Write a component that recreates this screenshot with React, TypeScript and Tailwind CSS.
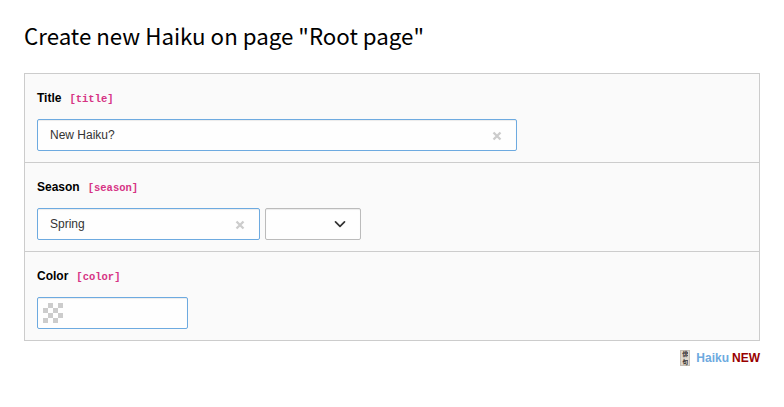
import type { ReactNode } from "react";

function Field({ label, name, children }: { label: string; name: string; children: ReactNode }) {
  return (
    <section className="h-[89px] border-b border-[#cccccc] px-3 pt-4">
      <label className="flex h-[18px] items-center text-[12px] font-bold leading-[18px] text-black">
        <span className="pb-[2px]">{label}</span>
        <code className="ml-2 pt-px font-['Liberation_Mono',monospace] text-[10.5px] leading-[17px] text-[#d63384]">
          [{name}]
        </code>
      </label>
      <div className="mt-[11px] flex gap-[5px]">{children}</div>
    </section>
  );
}

const box =
  "flex h-8 items-center rounded-[2px] border bg-[#fefefe] text-[12px] text-[#333333] shadow-[inset_0_1px_1px_rgba(0,0,0,0.075)]";

function Clear() {
  return (
    <svg className="mt-[2px] h-[10px] w-[10px]" viewBox="0 0 10 10" aria-hidden="true">
      <path d="M1.5 1.5L8.5 8.5M8.5 1.5L1.5 8.5" stroke="#cccccc" strokeWidth="2.3" />
    </svg>
  );
}

function Checker() {
  return (
    <svg className="h-5 w-5" viewBox="0 0 4 4" fill="#cccccc" shapeRendering="crispEdges" aria-hidden="true">
      <path d="M1 0h1v1h-1zM3 0h1v1h-1zM0 1h1v1h-1zM2 1h1v1h-1zM1 2h1v1h-1zM3 2h1v1h-1zM0 3h1v1h-1zM2 3h1v1h-1z" />
    </svg>
  );
}

export default function App() {
  return (
    <main className="h-[407px] w-[784px] bg-white px-6 pt-[17px] font-['Liberation_Sans',Arial,sans-serif]">
      <h1 className="h-9 whitespace-nowrap font-['Noto_Sans_CJK_SC',sans-serif] text-[22.3px] leading-9 text-black">
        Create new Haiku on page "Root page"
      </h1>
      <div className="mt-5 border-x border-t border-[#cccccc] bg-[#fafafa]">
        <Field label="Title" name="title">
          <div className={`${box} w-[480px] justify-between border-[#6daae0] pl-3 pr-[14px]`}>
            <span>New Haiku?</span>
            <Clear />
          </div>
        </Field>
        <Field label="Season" name="season">
          <div className={`${box} w-[223px] justify-between border-[#6daae0] pl-3 pr-[14px]`}>
            <span>Spring</span>
            <Clear />
          </div>
          <div className={`${box} w-24 justify-end border-[#bbbbbb] pr-[14px]`}>
            <svg className="h-3 w-3" viewBox="0 0 12 12" fill="none" aria-hidden="true">
              <path d="M1.5 3.8L6 8.3L10.5 3.8" stroke="#333333" strokeWidth="1.7" strokeLinecap="round" strokeLinejoin="round" />
            </svg>
          </div>
        </Field>
        <Field label="Color" name="color">
          <div className={`${box} w-[151px] border-[#6daae0] pl-[5px]`}>
            <Checker />
          </div>
        </Field>
      </div>
      <footer className="mt-[9px] flex h-4 items-center justify-end text-[12px] font-bold leading-4">
        <span className="mr-[6px] grid h-4 w-[10px] grid-rows-2 justify-items-center bg-[#ded7cc] font-['Noto_Sans_CJK_JP',sans-serif] text-[6px] font-bold leading-[8px] text-[#333333] shadow-[inset_0_0_0_1px_#c5beb5]">
          <span className="h-2 overflow-hidden">俳</span>
          <span className="h-2 overflow-hidden">句</span>
        </span>
        <span className="text-[#6daae0]">Haiku</span>
        <span className="ml-[3px] text-[#990000]">NEW</span>
      </footer>
    </main>
  );
}
